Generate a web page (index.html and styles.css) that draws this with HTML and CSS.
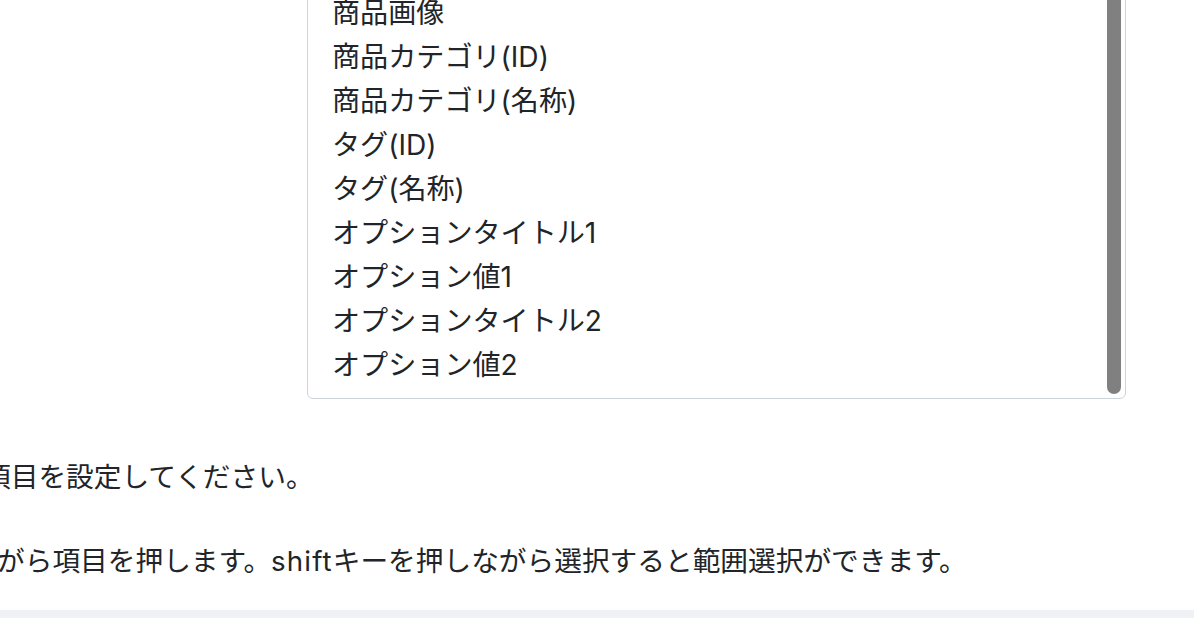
FILE: index.html
```html
<!DOCTYPE html>
<html lang="ja">
<head>
<meta charset="utf-8">
<link rel="stylesheet" href="styles.css">
</head>
<body>
<div class="page">
  <div class="field">
    <div class="listbox">
      <ul class="options">
        <li>商品画像</li>
        <li>商品カテゴリ(ID)</li>
        <li>商品カテゴリ(名称)</li>
        <li>タグ(ID)</li>
        <li>タグ(名称)</li>
        <li>オプションタイトル1</li>
        <li>オプション値1</li>
        <li>オプションタイトル2</li>
        <li>オプション値2</li>
      </ul>
      <div class="thumb"></div>
    </div>
  </div>
  <p class="help help-1">項目を設定してください。</p>
  <p class="help help-2">がら項目を押します。<span class="latin">shift</span>キーを押しながら選択すると範囲選択ができます。</p>
  <div class="footer-band"></div>
</div>
</body>
</html>
```

FILE: styles.css
```css
* { box-sizing: border-box; }
html, body {
  margin: 0;
  padding: 0;
  background: #ffffff;
  overflow: hidden;
}
body {
  font-family: "Inter", "Noto Sans CJK JP", "Noto Sans", sans-serif;
  color: #212529;
  font-size: 27.7px;
}
.page {
  width: 1194px;
  height: 618px;
  display: flex;
  flex-direction: column;
}
.field {
  padding-left: 307px;
  margin-top: -16px;
}
.listbox {
  position: relative;
  width: 819px;
  border: 1px solid #ced4da;
  border-radius: 6px;
  padding: 6px 0 11px 24px;
  background: #fff;
  font-size: 28.1px;
}
.options {
  list-style: none;
  margin: 0;
  padding: 0;
}
.options li {
  height: 44px;
  line-height: 44px;
  white-space: nowrap;
}
.thumb {
  position: absolute;
  top: 4px;
  right: 4px;
  bottom: 4px;
  width: 14px;
  border-radius: 7px;
  background: #808080;
}
.help {
  margin: 0;
  line-height: 42px;
  white-space: nowrap;
}
.latin {
  letter-spacing: 0.04em;
}
.help-1 {
  margin-top: 57px;
  margin-left: -17px;
}
.help-2 {
  margin-top: 42px;
  margin-left: -3px;
}
.footer-band {
  margin-top: 28px;
  flex: 1;
  background: #f0f1f5;
}
```
